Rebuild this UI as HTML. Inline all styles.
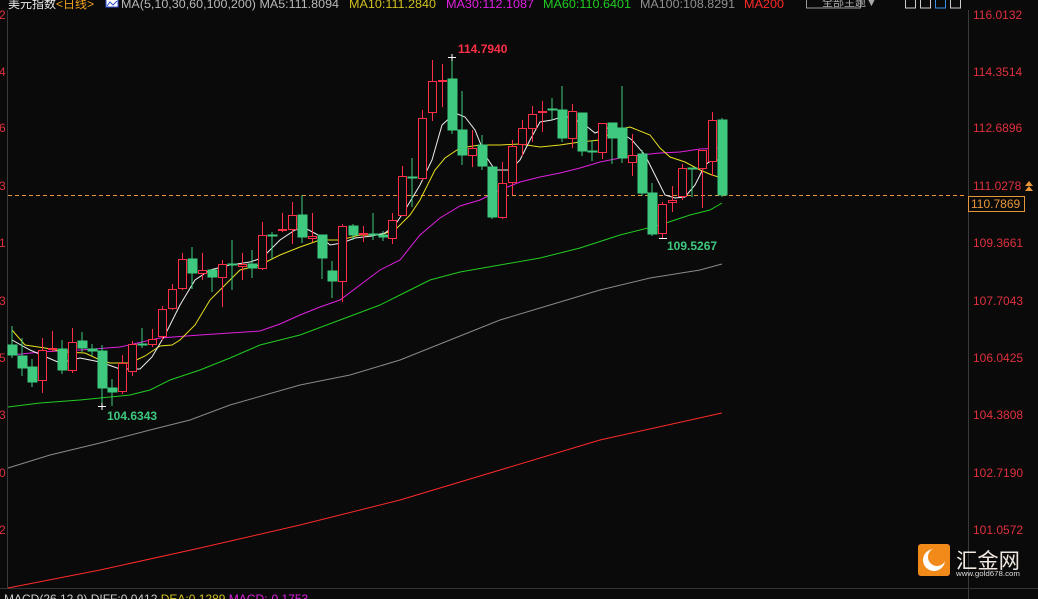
<!DOCTYPE html>
<html><head><meta charset="utf-8"><style>
html,body{margin:0;padding:0;background:#0a0a0a;width:1038px;height:599px;overflow:hidden;font-family:"Liberation Sans","Noto Sans CJK SC",sans-serif}
svg{position:absolute;left:0;top:0}
</style></head><body>
<svg width="1038" height="599" xmlns="http://www.w3.org/2000/svg" font-family="Liberation Sans, Noto Sans CJK SC, sans-serif">
<rect width="1038" height="599" fill="#0a0a0a"/>
<line x1="7.5" y1="10" x2="7.5" y2="588" stroke="#3a3a3a"/>
<line x1="968.5" y1="10" x2="968.5" y2="599" stroke="#3a3a3a"/>
<line x1="0" y1="588.5" x2="1038" y2="588.5" stroke="#333"/>
<g fill="#e0303e" font-size="12">
<text x="973" y="19">116.0132</text><text x="973" y="76">114.3514</text><text x="973" y="132">112.6896</text><text x="973" y="190">111.0278</text><text x="973" y="247">109.3661</text><text x="973" y="305">107.7043</text><text x="973" y="362">106.0425</text><text x="973" y="419">104.3808</text><text x="973" y="477">102.7190</text><text x="973" y="534">101.0572</text>
<text x="-1" y="76">4</text><text x="-1" y="132">6</text><text x="-1" y="190">3</text><text x="-1" y="247">1</text><text x="-1" y="305">3</text><text x="-1" y="362">5</text><text x="-1" y="419">3</text><text x="-1" y="477">0</text><text x="-1" y="534">2</text><text x="-1" y="19">2</text>
</g>
<line x1="8" y1="195.5" x2="965" y2="195.5" stroke="#e8963a" stroke-dasharray="4,3"/>
<rect x="968.5" y="196.5" width="56" height="15" fill="#0a0a0a" stroke="#e8963a"/>
<text x="971" y="208" fill="#e8963a" font-size="12">110.7869</text>
<path d="M1025 186l4-5 4 5zM1025 191l4-5 4 5z" fill="#e8963a"/>
<g fill="none" stroke-width="1">
<polyline stroke="#ff2a2a" points="8,588 100,570 200,548 300,525 400,500 500,470 600,440 722,413"/>
<polyline stroke="#8a8a8a" points="8,468 50,455 100,443 150,430 190,420 230,405 300,385 350,375 400,360 450,340 500,320 550,305 600,290 650,278 700,270 722,264"/>
<polyline stroke="#22cc22" points="8,407 40,403 80,400 100,398 130,395 150,390 170,380 200,370 230,358 260,345 300,335 340,320 380,305 400,295 430,280 460,272 500,265 540,258 580,248 620,235 660,225 690,215 710,210 722,203"/>
<polyline stroke="#e020e0" points="12,355 40,352 80,350 120,347 160,338 200,335 230,333 260,331 280,324 300,315 320,307 340,300 360,285 380,270 400,260 420,235 440,218 460,206 480,200 500,190 520,182 540,177 560,173 580,168 600,162 620,158 640,155 660,153 680,152 700,149 722,148"/>
<polyline stroke="#e8e020" points="12,330 25,345 45,348 65,352 85,353 100,360 110,363 130,363 145,356 160,346 172,345 180,340 195,325 210,300 225,285 240,270 260,265 280,255 300,247 320,240 340,240 360,235 380,235 395,230 410,215 420,200 435,170 445,158 460,148 480,145 500,145 520,144 540,147 560,145 580,142 600,140 615,130 630,127 650,135 660,148 670,157 685,162 700,170 712,175 722,178"/>
<polyline stroke="#f0f0f0" points="12,340 30,350 60,363 80,358 100,362 120,369 140,369 152,357 165,335 180,305 195,280 210,270 230,265 250,262 262,258 280,240 295,230 305,228 320,236 330,245 342,243 355,238 372,236 385,233 395,225 405,210 420,185 432,160 442,125 455,113 465,117 475,130 485,155 495,170 510,170 520,160 530,140 540,122 552,120 565,116 575,120 585,125 595,133 610,127 620,132 632,140 645,155 655,175 665,195 675,198 685,197 695,185 705,165 712,160 722,160"/>
</g>
<g stroke="#3ec97f" fill="#3ec97f">
<line x1="12" y1="326" x2="12" y2="358"/><rect x="8" y="345" width="9" height="10"/>
<line x1="22" y1="338" x2="22" y2="376"/><rect x="18" y="356" width="9" height="12"/>
<line x1="32" y1="359" x2="32" y2="387"/><rect x="28" y="367" width="9" height="15"/>
<line x1="62" y1="340" x2="62" y2="374"/><rect x="58" y="349" width="9" height="21"/>
<line x1="82" y1="332" x2="82" y2="352"/><rect x="78" y="341" width="9" height="7"/>
<line x1="92" y1="344" x2="92" y2="356"/><rect x="88" y="349" width="9" height="2"/>
<line x1="102" y1="345" x2="102" y2="406"/><rect x="98" y="351" width="9" height="37"/>
<line x1="112" y1="379" x2="112" y2="406"/><rect x="108" y="388" width="9" height="4"/>
<line x1="142" y1="328" x2="142" y2="348"/><rect x="138" y="344" width="9" height="1"/>
<line x1="192" y1="247" x2="192" y2="289"/><rect x="188" y="259" width="9" height="14"/>
<line x1="212" y1="269" x2="212" y2="292"/><rect x="208" y="270" width="9" height="7"/>
<line x1="232" y1="240" x2="232" y2="290"/><rect x="228" y="264" width="9" height="1"/>
<line x1="252" y1="250" x2="252" y2="278"/><rect x="248" y="264" width="9" height="4"/>
<line x1="272" y1="232" x2="272" y2="259"/><rect x="268" y="235" width="9" height="1"/>
<line x1="302" y1="195" x2="302" y2="243"/><rect x="298" y="215" width="9" height="22"/>
<line x1="322" y1="235" x2="322" y2="279"/><rect x="318" y="235" width="9" height="23"/>
<line x1="332" y1="261" x2="332" y2="298"/><rect x="328" y="271" width="9" height="10"/>
<line x1="353" y1="224" x2="353" y2="240"/><rect x="349" y="226" width="9" height="9"/>
<line x1="373" y1="213" x2="373" y2="240"/><rect x="369" y="234" width="9" height="1"/>
<line x1="383" y1="231" x2="383" y2="241"/><rect x="379" y="235" width="9" height="2"/>
<line x1="412" y1="158" x2="412" y2="207"/><rect x="408" y="177" width="9" height="1"/>
<line x1="452" y1="57" x2="452" y2="134"/><rect x="448" y="79" width="9" height="51"/>
<line x1="462" y1="91" x2="462" y2="165"/><rect x="458" y="130" width="9" height="25"/>
<line x1="482" y1="135" x2="482" y2="170"/><rect x="478" y="145" width="9" height="21"/>
<line x1="492" y1="167" x2="492" y2="219"/><rect x="488" y="167" width="9" height="50"/>
<line x1="552" y1="98" x2="552" y2="120"/><rect x="548" y="109" width="9" height="1"/>
<line x1="562" y1="86" x2="562" y2="142"/><rect x="558" y="110" width="9" height="28"/>
<line x1="582" y1="113" x2="582" y2="156"/><rect x="578" y="113" width="9" height="38"/>
<line x1="592" y1="140" x2="592" y2="161"/><rect x="588" y="151" width="9" height="1"/>
<line x1="612" y1="123" x2="612" y2="164"/><rect x="608" y="123" width="9" height="15"/>
<line x1="622" y1="86" x2="622" y2="163"/><rect x="618" y="128" width="9" height="30"/>
<line x1="642" y1="150" x2="642" y2="196"/><rect x="638" y="154" width="9" height="39"/>
<line x1="652" y1="183" x2="652" y2="236"/><rect x="648" y="193" width="9" height="41"/>
<line x1="692" y1="168" x2="692" y2="197"/><rect x="688" y="168" width="9" height="1"/>
<line x1="722" y1="118" x2="722" y2="197"/><rect x="718" y="120" width="9" height="75"/>
</g>
<g stroke="#ff3045" fill="#0a0a0a">
<line x1="42.5" y1="338" x2="42.5" y2="393"/><rect x="38.5" y="350.5" width="8" height="30"/>
<line x1="52.5" y1="331" x2="52.5" y2="352"/><rect x="48.5" y="348.5" width="8" height="1"/>
<line x1="72.5" y1="328" x2="72.5" y2="373"/><rect x="68.5" y="342.5" width="8" height="28"/>
<line x1="122.5" y1="355" x2="122.5" y2="394"/><rect x="118.5" y="363.5" width="8" height="28"/>
<line x1="132.5" y1="341" x2="132.5" y2="376"/><rect x="128.5" y="344.5" width="8" height="27"/>
<line x1="152.5" y1="329" x2="152.5" y2="347"/><rect x="148.5" y="339.5" width="8" height="5"/>
<line x1="162.5" y1="306" x2="162.5" y2="340"/><rect x="158.5" y="309.5" width="8" height="27"/>
<line x1="172.5" y1="284" x2="172.5" y2="310"/><rect x="168.5" y="289.5" width="8" height="19"/>
<line x1="182.5" y1="253" x2="182.5" y2="290"/><rect x="178.5" y="259.5" width="8" height="29"/>
<line x1="202.5" y1="253" x2="202.5" y2="280"/><rect x="198.5" y="270.5" width="8" height="3"/>
<line x1="222.5" y1="260" x2="222.5" y2="307"/><rect x="218.5" y="264.5" width="8" height="13"/>
<line x1="242.5" y1="253" x2="242.5" y2="280"/><rect x="238.5" y="264.5" width="8" height="2"/>
<line x1="262.5" y1="222" x2="262.5" y2="270"/><rect x="258.5" y="235.5" width="8" height="33"/>
<line x1="282.5" y1="213" x2="282.5" y2="232"/><rect x="278.5" y="229.5" width="8" height="1"/>
<line x1="292.5" y1="202" x2="292.5" y2="244"/><rect x="288.5" y="215.5" width="8" height="14"/>
<line x1="312.5" y1="213" x2="312.5" y2="242"/><rect x="308.5" y="236.5" width="8" height="2"/>
<line x1="342.5" y1="224" x2="342.5" y2="302"/><rect x="338.5" y="226.5" width="8" height="55"/>
<line x1="363.5" y1="226" x2="363.5" y2="242"/><rect x="359.5" y="233.5" width="8" height="1"/>
<line x1="392.5" y1="213" x2="392.5" y2="244"/><rect x="388.5" y="220.5" width="8" height="18"/>
<line x1="402.5" y1="166" x2="402.5" y2="216"/><rect x="398.5" y="176.5" width="8" height="39"/>
<line x1="422.5" y1="110" x2="422.5" y2="180"/><rect x="418.5" y="118.5" width="8" height="60"/>
<line x1="432.5" y1="60" x2="432.5" y2="121"/><rect x="428.5" y="81.5" width="8" height="31"/>
<line x1="442.5" y1="64" x2="442.5" y2="107"/><rect x="438.5" y="80.5" width="8" height="1"/>
<line x1="472.5" y1="130" x2="472.5" y2="167"/><rect x="468.5" y="148.5" width="8" height="7"/>
<line x1="502.5" y1="162" x2="502.5" y2="219"/><rect x="498.5" y="183.5" width="8" height="34"/>
<line x1="512.5" y1="140" x2="512.5" y2="195"/><rect x="508.5" y="146.5" width="8" height="36"/>
<line x1="522.5" y1="120" x2="522.5" y2="156"/><rect x="518.5" y="128.5" width="8" height="16"/>
<line x1="532.5" y1="106" x2="532.5" y2="142"/><rect x="528.5" y="114.5" width="8" height="14"/>
<line x1="542.5" y1="101" x2="542.5" y2="132"/><rect x="538.5" y="111.5" width="8" height="1"/>
<line x1="572.5" y1="104" x2="572.5" y2="148"/><rect x="568.5" y="111.5" width="8" height="27"/>
<line x1="602.5" y1="123" x2="602.5" y2="159"/><rect x="598.5" y="123.5" width="8" height="29"/>
<line x1="632.5" y1="134" x2="632.5" y2="176"/><rect x="628.5" y="155.5" width="8" height="7"/>
<line x1="662.5" y1="202" x2="662.5" y2="238"/><rect x="658.5" y="204.5" width="8" height="29"/>
<line x1="672.5" y1="186" x2="672.5" y2="212"/><rect x="668.5" y="200.5" width="8" height="2"/>
<line x1="682.5" y1="164" x2="682.5" y2="200"/><rect x="678.5" y="168.5" width="8" height="28"/>
<line x1="702.5" y1="150" x2="702.5" y2="208"/><rect x="698.5" y="150.5" width="8" height="18"/>
<line x1="712.5" y1="112" x2="712.5" y2="176"/><rect x="708.5" y="120.5" width="8" height="41"/>
</g>
<g stroke="#fff"><line x1="98" y1="406.5" x2="106" y2="406.5"/><line x1="102" y1="403" x2="102" y2="410"/>
<line x1="448" y1="57.5" x2="456" y2="57.5"/><line x1="452" y1="54" x2="452" y2="61"/>
<line x1="659" y1="238.5" x2="667" y2="238.5"/></g>
<text x="107" y="420" fill="#3ec97f" font-size="12" font-weight="bold">104.6343</text>
<text x="458" y="53" fill="#ff3045" font-size="12" font-weight="bold">114.7940</text>
<text x="667" y="250" fill="#3ec97f" font-size="12" font-weight="bold">109.5267</text>
<g font-size="12">
<text x="8" y="8" fill="#e8e8e8">美元指数<tspan fill="#f0a020">&lt;日线&gt;</tspan></text>
<rect x="106" y="-1" width="12" height="8" fill="#fff" stroke="#3050d0"/>
<path d="M107 6l3-4 3 3 4-4" stroke="#3050d0" fill="none"/>
<text x="121" y="8" fill="#b8b8b8" textLength="218" lengthAdjust="spacingAndGlyphs">MA(5,10,30,60,100,200) MA5:111.8094</text>
<text x="349" y="8" fill="#d0c020" textLength="87" lengthAdjust="spacingAndGlyphs">MA10:111.2840</text>
<text x="446" y="8" fill="#e020e0" textLength="88" lengthAdjust="spacingAndGlyphs">MA30:112.1087</text>
<text x="543" y="8" fill="#22cc22" textLength="88" lengthAdjust="spacingAndGlyphs">MA60:110.6401</text>
<text x="640" y="8" fill="#909090" textLength="95" lengthAdjust="spacingAndGlyphs">MA100:108.8291</text>
<text x="744" y="8" fill="#ff2a2a" textLength="40" lengthAdjust="spacingAndGlyphs">MA200</text>
<rect x="806.5" y="-2" width="54" height="10" fill="none" stroke="#999"/>
<text x="822" y="6" fill="#aaa" font-size="11">全部主题▼</text>
<rect x="905.5" y="-2" width="10" height="10" fill="none" stroke="#ccc"/>
<rect x="920.5" y="-2" width="10" height="10" fill="none" stroke="#ccc"/>
<rect x="935.5" y="-2" width="10" height="10" fill="none" stroke="#3a8ee8"/>
<rect x="950.5" y="-2" width="10" height="10" fill="none" stroke="#ccc"/>
</g>
<text x="4" y="603" fill="#ccc" font-size="12">MACD(26,12,9) DIFF:0.0412 <tspan fill="#d0c020">DEA:0.1289</tspan> <tspan fill="#e020e0">MACD:-0.1753</tspan></text>
<rect x="918" y="544" width="32" height="32" rx="3" fill="#f28a1a"/>
<circle cx="934" cy="560" r="11" fill="#fff"/>
<circle cx="937" cy="557" r="9" fill="#f28a1a"/>
<text x="956" y="568" fill="#f0e8e0" font-size="21" font-family="Noto Sans CJK SC, sans-serif" textLength="64" lengthAdjust="spacingAndGlyphs">汇金网</text>
<text x="956" y="576" fill="#ddd" font-size="7" textLength="64" lengthAdjust="spacingAndGlyphs">www.gold678.com</text>
</svg>
</body></html>
